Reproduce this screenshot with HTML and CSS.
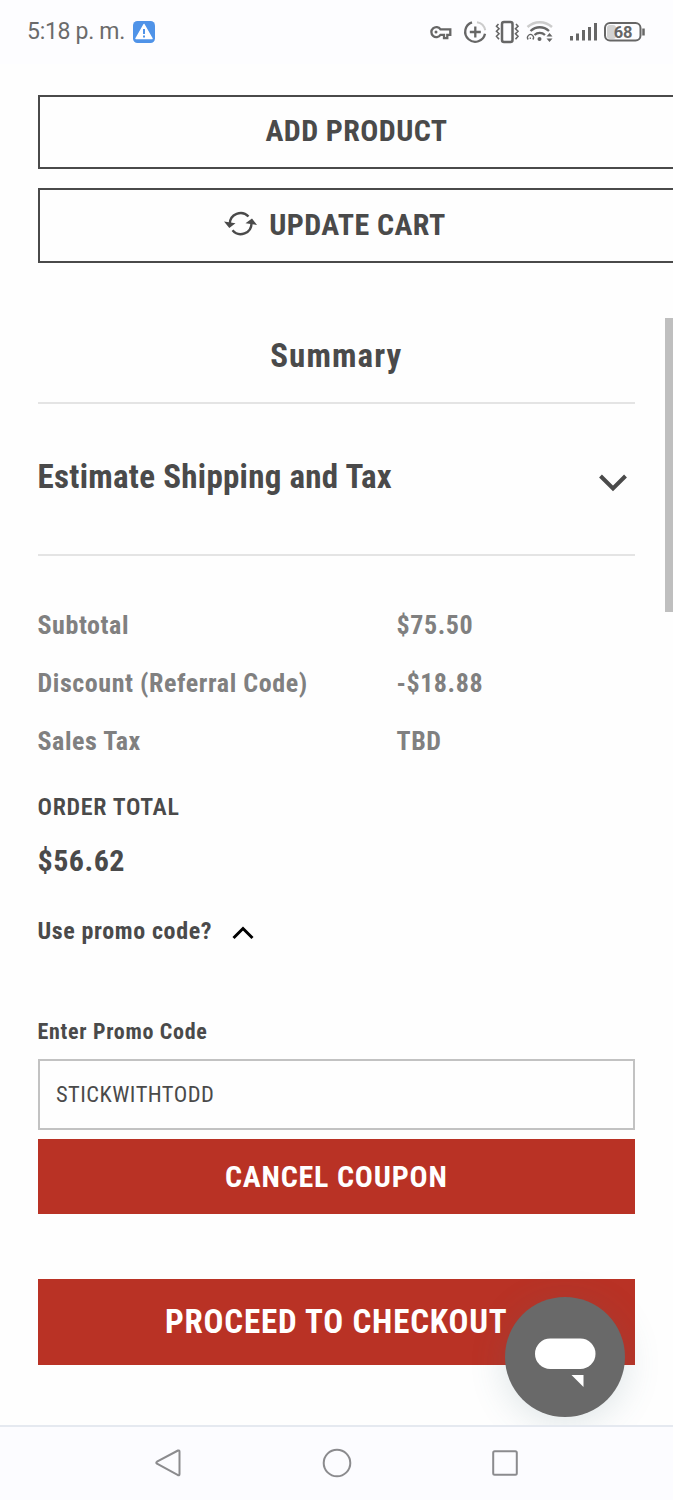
FILE: index.html
```html
<!DOCTYPE html>
<html lang="en">
<head>
<meta charset="utf-8">
<title>Cart</title>
<link rel="stylesheet" href="styles.css">
</head>
<body>
<div class="screen">
  <header class="status">
    <span class="time">5:18 p. m.</span>
    <svg class="alert" width="24" height="24" viewBox="0 0 24 24"><rect x="1" y="1" width="22" height="22" rx="4.500" fill="#4f93e8"/><path d="M12 4.500 20 18.500H4Z" fill="#fff" stroke="#fff" stroke-width="1.500" stroke-linejoin="round"/><path d="M12 9v5M12 15.500v2" stroke="#4f93e8" stroke-width="2"/></svg>
    <svg class="indicators" width="223" height="30" viewBox="425 16 223 30" fill="none" stroke="#666" stroke-width="2">
      <path d="M440.500 28.300a5 5 0 1 0 0 5.600H444v3.200h3.300v-3.200h3v-5.600z" stroke-width="2.300"/><circle cx="436" cy="31" r="1.500" fill="#666" stroke="none"/>
      <path d="M472 21.300a10 10 0 1 0 13 11.500" stroke-width="2.300"/><path d="M477 21.300a10 10 0 0 1 8.200 8" stroke="#ccc"/><path d="M475.300 25.500v11M469.800 31h11" stroke-width="2.300"/>
      <rect x="502" y="21" width="10.500" height="20" rx="2" stroke-width="2.500"/><path d="M498.500 23l-2 2.200 2.500 2.500-2.500 2.500 2.500 2.500-2.500 2.500 2.500 3M516 23l2 2.200-2.500 2.500 2.500 2.500-2.500 2.500 2.500 2.500-2.500 3" stroke-width="1.600"/>
      <path d="M527.500 26c7-6.500 17.500-6.500 24.500 0" stroke="#ccc" stroke-width="2.500"/><path d="M530.500 30c5.500-5 13-5 18.500 0M534.500 34c3-2.800 7.500-2.800 10.500 0" stroke-width="2.300"/><circle cx="539.500" cy="38" r="2" fill="#666" stroke="none"/><path d="M528.200 38.500a3 3 0 1 1 4.600 0M530.300 36.500v1.500" stroke-width="1.300"/><path d="M546.500 35.500l3-3.500 3 3.500zM546.500 37.500l3 3.500 3-3.500z" fill="#666" stroke="none"/>
      <path d="M571.500 35v4.500M577.500 32.500v7M583.500 29v10.500M589.500 26v13.500M595.500 22v17.500" stroke-width="3"/>
      <rect x="607" y="24" width="9" height="14" rx="3" fill="#d2d2d2" stroke="none"/><rect x="605" y="22" width="35.500" height="17.500" rx="5"/><path d="M643.500 27.500v7" stroke-width="2.500"/>
      <text class="battery" x="623" y="36.600" text-anchor="middle">68</text>
    </svg>
  </header>

  <main class="page">
    <button class="outline add"><span>ADD PRODUCT</span></button>
    <button class="outline update">
      <svg width="33" height="25" viewBox="0 0 33 25" fill="none" stroke="#4a4a4a" stroke-width="2.400"><path d="M24.500 5.500A10.800 10.800 0 0 0 5.800 13M8.500 19.300A10.800 10.800 0 0 0 27.500 12"/><path d="M0 10.500 11.500 12.300 5.300 17zM21.500 12.300 28 7.500 33 14z" fill="#4a4a4a" stroke="none"/></svg>
      <span>UPDATE CART</span>
    </button>
    <h2 class="summary">Summary</h2>
    <section class="estimate">
      <h3>Estimate Shipping and Tax</h3>
      <svg width="30" height="20" viewBox="0 0 30 20"><path d="M2.500 3 15 15.500 27.500 3" fill="none" stroke="#4a4a4a" stroke-width="4"/></svg>
    </section>
    <dl class="totals">
      <dt>Subtotal</dt><dd>$75.50</dd>
      <dt>Discount (Referral Code)</dt><dd>-$18.88</dd>
      <dt>Sales Tax</dt><dd>TBD</dd>
    </dl>
    <div class="order-label">ORDER TOTAL</div>
    <div class="order-value">$56.62</div>
    <div class="promo-toggle"><span>Use promo code?</span>
      <svg width="24" height="16" viewBox="0 0 24 16"><path d="M2.500 13 12 3.500 21.500 13" fill="none" stroke="#000" stroke-width="3"/></svg>
    </div>
    <label class="promo-label">Enter Promo Code</label>
    <div class="field"><span>STICKWITHTODD</span></div>
    <button class="red cancel"><span>CANCEL COUPON</span></button>
    <button class="red checkout"><span>PROCEED TO CHECKOUT</span></button>
  </main>

  <nav class="navbar">
    <svg width="28" height="30" viewBox="0 0 28 30"><path d="M24 2.500 3 13.700q-1.400 1 0 2L24 27.200q1.500.5 1.500-1.200V3.700q0-1.700-1.500-1.200z"/></svg>
    <svg width="30" height="30" viewBox="0 0 30 30"><circle cx="15" cy="15" r="13.300"/></svg>
    <svg width="28" height="28" viewBox="0 0 28 28"><rect x="2.200" y="2.200" width="23.600" height="23.600" rx="1.500"/></svg>
  </nav>
  <div class="scrollbar"></div>
  <div class="chat"><svg width="120" height="120" viewBox="0 0 120 120" fill="#fff"><rect x="30" y="41.500" width="60.500" height="30.500" rx="15.250"/><path d="M66.500 78h12v12z"/></svg></div>
</div>
</body>
</html>
```
FILE: styles.css
```css
* { box-sizing: border-box; margin: 0; padding: 0; }
body { background: #fefefe; }
.screen {
  position: relative; width: 673px; height: 1500px; overflow: hidden;
  display: flex; flex-direction: column;
  font-family: "Roboto Condensed", Roboto, sans-serif; font-stretch: 75%;
  font-weight: 700; color: #4a4a4a; letter-spacing: 0.57px;
}
.status {
  height: 64px; flex: none; display: flex; align-items: center;
  padding: 0 25px 1px 27px; background: #fdfdff;
}
.time { font: 400 23px/30px Roboto, sans-serif; letter-spacing: -0.3px; color: #6b6b6b; padding-top: 1px; }
.alert { margin: 1px 0 0 7px; }
.indicators { margin-left: auto; }
.battery { font: 700 16.500px Roboto, sans-serif; letter-spacing: -0.3px; fill: #666; stroke: none; }
.page { flex: 1; padding: 31px 38px 0 37.500px; display: flex; flex-direction: column; }
button { font: inherit; font-stretch: 75%; color: inherit; border: 0; display: flex; align-items: center; justify-content: center; white-space: nowrap; flex: none; }
.outline { width: 638px; height: 74px; border: 2px solid #4a4a4a; background: #fefefe; font-size: 30px; line-height: 35px; letter-spacing: 0.4px; }
.add { padding-bottom: 3px; }
.update { margin-top: 19px; height: 75px; padding: 0 43px 2px 0; gap: 12px; }
.update svg { margin-bottom: 2px; }
.summary { margin-top: 73px; height: 68px; font-size: 33px; line-height: 40px; letter-spacing: 1.1px; text-align: center; border-bottom: 2px solid #e4e4e4; flex: none; }
.estimate { height: 152px; flex: none; display: flex; justify-content: space-between; padding: 53px 7px 0 0; border-bottom: 2px solid #e4e4e4; }
.estimate h3 { font-size: 33px; line-height: 40px; letter-spacing: 0.28px; white-space: nowrap; }
.estimate svg { margin-top: 16px; }
.totals { margin-top: 41px; display: grid; grid-template-columns: 359px 1fr; grid-auto-rows: 58px; font-size: 26px; line-height: 57px; color: #808080; flex: none; }
.order-label { margin-top: 21px; font-size: 24px; line-height: 30px; font-weight: 600; letter-spacing: 0.68px; }
.order-value { margin-top: 19px; font-size: 30px; line-height: 40px; letter-spacing: 0.5px; }
.promo-toggle { margin-top: 35px; display: flex; align-items: center; gap: 19px; font-size: 24px; line-height: 30px; letter-spacing: 0.62px; }
.promo-toggle svg { margin-top: 3px; }
.promo-label { margin-top: 71px; font-size: 22px; line-height: 30px; letter-spacing: 0.7px; }
.field { margin-top: 12px; height: 71px; flex: none; border: 2px solid #c2c2c2; padding: 0 0 2px 16.500px; display: flex; align-items: center; font-size: 22.500px; font-weight: 400; letter-spacing: 0.45px; }
.red { background: #b93225; color: #fff; padding-bottom: 2px; }
.cancel { margin-top: 9px; height: 75px; font-size: 30px; letter-spacing: 0.8px; padding-bottom: 1px; }
.checkout { margin-top: 65px; height: 86px; font-size: 33px; letter-spacing: 0.83px; }
.navbar { position: relative; z-index: 1; height: 75px; flex: none; border-top: 2px solid #e5e9f0; background: #fcfcff; display: flex; justify-content: center; align-items: center; gap: 139.500px; padding-bottom: 2px; fill: none; stroke: #8b8b8e; stroke-width: 2; }
.scrollbar { position: absolute; right: 0; top: 318px; width: 8px; height: 294px; background: #bfbfbf; }
.chat { position: absolute; left: 504.500px; top: 1297px; width: 120px; height: 120px; border-radius: 50%; background: #696969; box-shadow: 0 6px 36px rgba(70, 110, 120, 0.18); }
```
